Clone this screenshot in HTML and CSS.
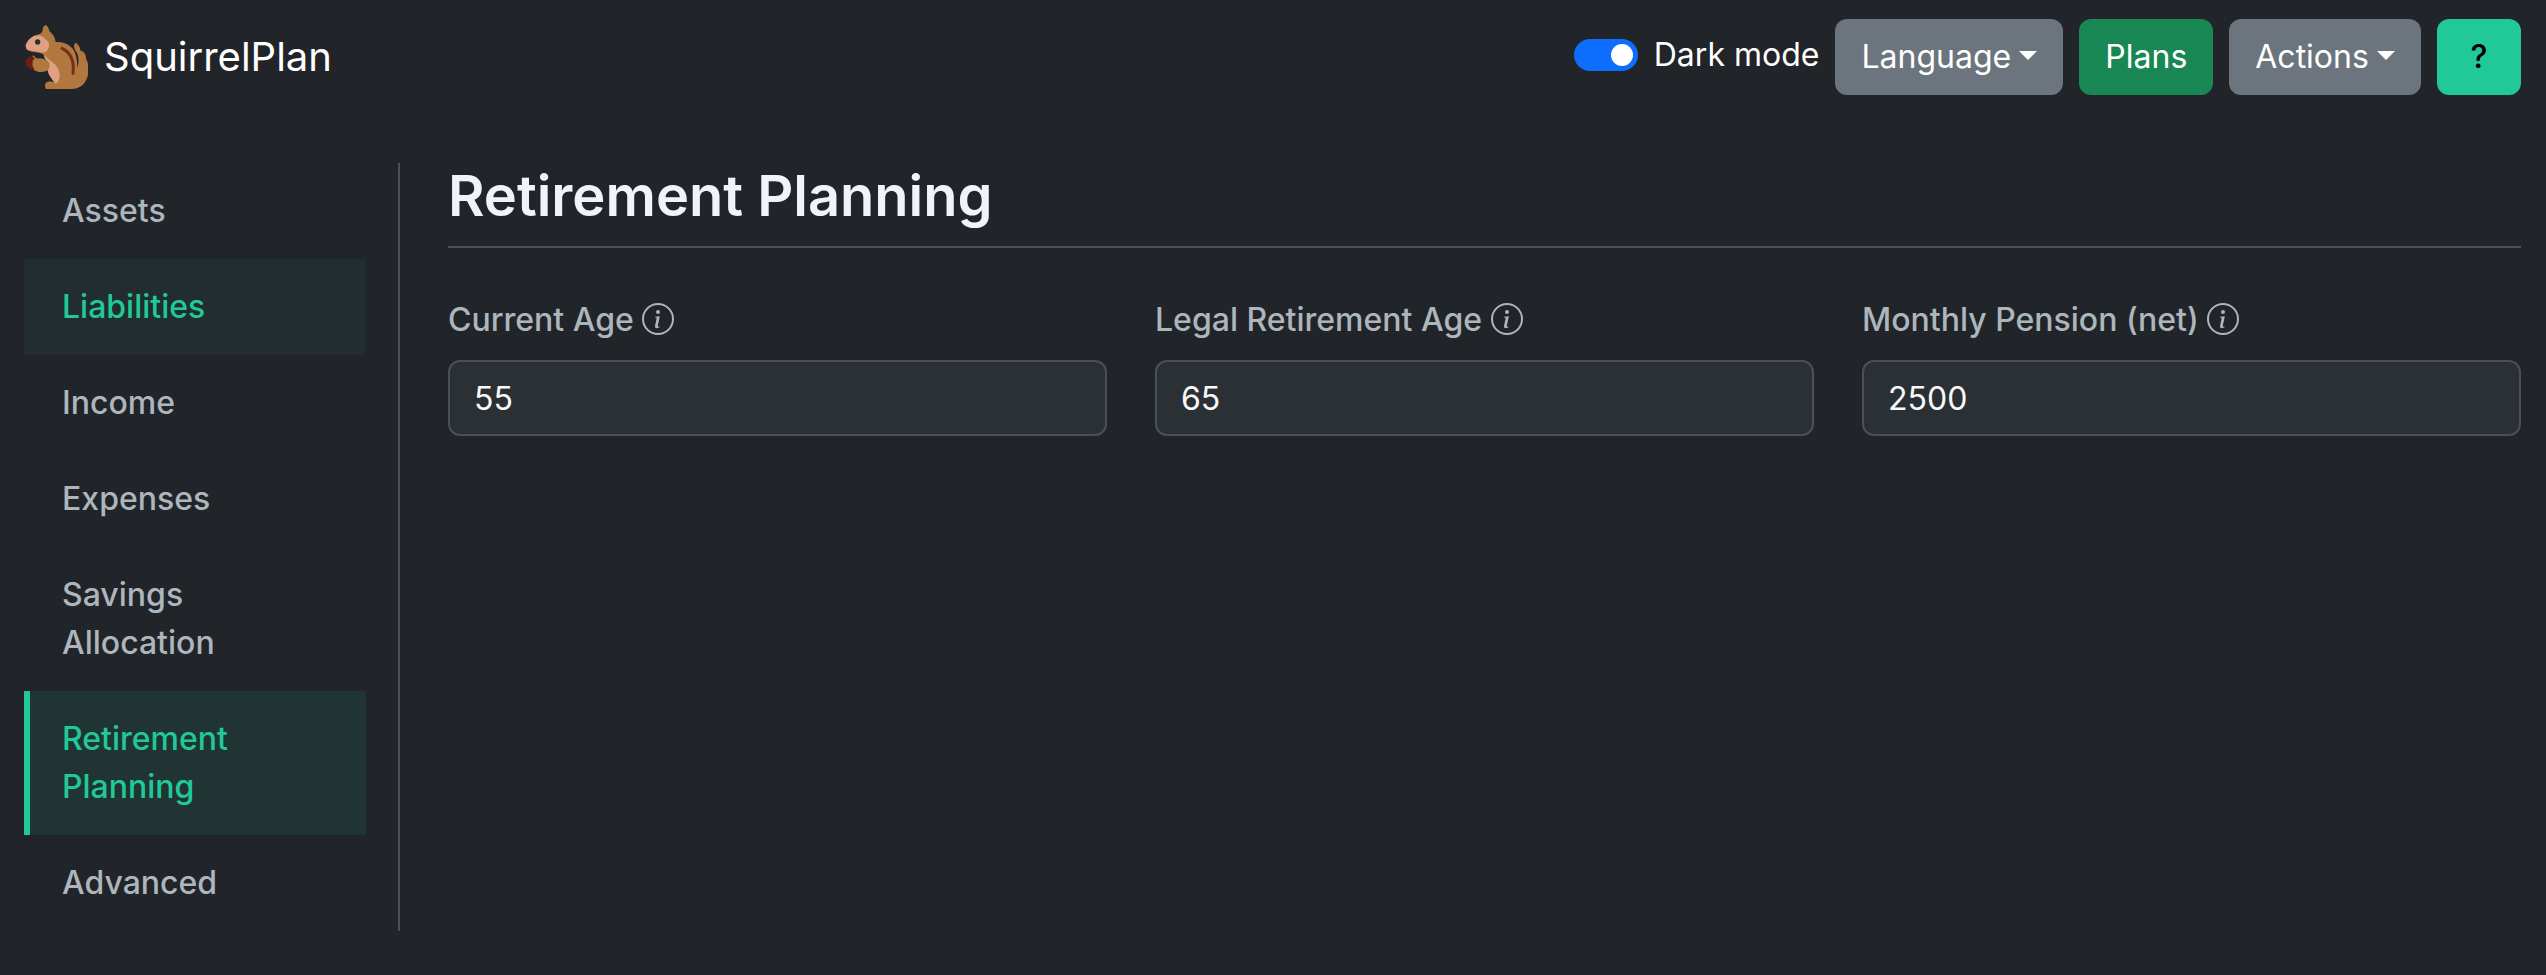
FILE: index.html
```html
<!DOCTYPE html>
<html lang="en">
<head>
<meta charset="utf-8">
<title>SquirrelPlan</title>
<link rel="stylesheet" href="styles.css">
</head>
<body>
<svg class="sprite" aria-hidden="true">
  <symbol id="info" viewBox="0 0 16 16">
    <path d="M8 15A7 7 0 1 1 8 1a7 7 0 0 1 0 14m0 1A8 8 0 1 0 8 0a8 8 0 0 0 0 16"/>
    <path d="m8.930 6.588-2.290.287-.082.380.450.083c.294.070.352.176.288.469l-.738 3.468c-.194.897.105 1.319.808 1.319.545 0 1.178-.252 1.465-.598l.088-.416c-.200.176-.492.246-.686.246-.275 0-.375-.193-.304-.533zM9 4.500a1 1 0 1 1-2 0 1 1 0 0 1 2 0"/>
  </symbol>
</svg>
<div class="page">
  <header class="topbar">
    <a class="brand">
      <svg class="brand-logo" viewBox="42 45 192 192">
        <path fill="#b0783f" d="M108 45C113 49 117 56 118 63C128 71 135 81 137 96C158 95 178 103 189 117C199 132 202 153 202 173C208 155 206 142 201 129C194 117 188 109 196 98C203 100 211 112 212 123C221 122 229 134 228 147C236 156 233 170 235 185C233 217 213 237 184 237H108C103 230 104 218 113 215C120 213 128 215 132 216C124 207 117 194 114 181C104 186 88 188 76 182C67 178 65 168 67 158C65 152 64 144 68 137C72 135 75 141 79 145C88 146 99 145 105 149C111 146 107 141 103 136C94 125 66 129 53 121C46 117 46 107 51 101C58 87 69 75 88 73C94 69 99 66 98 57C99 51 104 46 108 45Z"/>
        <path fill="#df9f82" d="M47 105C54 88 68 76 88 76C101 80 107 89 115 95C120 108 116 122 104 127C94 131 86 124 76 124C61 124 45 118 47 105Z"/>
        <path fill="#df9f82" d="M100 130C106 142 120 150 131 160C148 174 154 196 145 214C141 221 136 222 132 215C123 203 114 193 113 181C121 172 121 160 113 153L104 145Z"/>
        <path fill="#6f1f12" d="M68 140C73 142 77 146 69 151C66 159 66 170 73 177C61 180 48 169 47 158C46 146 58 137 68 140Z"/>
        <circle cx="83" cy="96" r="8" fill="#2a2d31"/>
        <path d="M156 115C181 126 194 154 189 190" fill="none" stroke="#7b2d16" stroke-width="9" stroke-linecap="round"/>
      </svg>
      <span>SquirrelPlan</span>
    </a>
    <div class="actions">
      <label class="switch"><span class="switch-track"><span class="switch-knob"></span></span><span>Dark mode</span></label>
      <button class="btn btn-secondary caret">Language</button>
      <button class="btn btn-success">Plans</button>
      <button class="btn btn-secondary caret">Actions</button>
      <button class="btn btn-help">?</button>
    </div>
  </header>
  <div class="layout">
    <nav class="sidebar">
      <a class="nav-item">Assets</a>
      <a class="nav-item nav-hover">Liabilities</a>
      <a class="nav-item">Income</a>
      <a class="nav-item">Expenses</a>
      <a class="nav-item">Savings Allocation</a>
      <a class="nav-item nav-active">Retirement Planning</a>
      <a class="nav-item">Advanced</a>
    </nav>
    <main class="content">
      <h1 class="title">Retirement Planning</h1>
      <div class="fields">
        <div class="field">
          <label class="field-label">Current Age <svg class="info"><use href="#info"/></svg></label>
          <input class="field-input" type="text" value="55">
        </div>
        <div class="field">
          <label class="field-label">Legal Retirement Age <svg class="info"><use href="#info"/></svg></label>
          <input class="field-input" type="text" value="65">
        </div>
        <div class="field">
          <label class="field-label">Monthly Pension (net) <svg class="info"><use href="#info"/></svg></label>
          <input class="field-input" type="text" value="2500">
        </div>
      </div>
    </main>
  </div>
</div>
</body>
</html>
```

FILE: styles.css
```css
* { box-sizing: border-box; }
body {
  margin: 0;
  background: #212529;
  color: #fff;
  font: 400 32px/48px Inter, "Noto Sans", sans-serif;
  overflow: hidden;
}
.sprite { display: none; }
.page { width: 2545px; }

.topbar {
  display: flex;
  align-items: center;
  justify-content: space-between;
  height: 114px;
  padding: 0 24px;
}
.brand { display: flex; align-items: center; gap: 16px; font-size: 40px; line-height: 60px; }
.brand-logo { width: 64px; height: 64px; }
.actions { display: flex; align-items: center; gap: 16px; }
.switch { display: flex; align-items: center; gap: 16px; padding-bottom: 4px; }
.switch-track {
  display: flex;
  align-items: center;
  justify-content: flex-end;
  width: 64px;
  height: 32px;
  padding-right: 5px;
  border-radius: 16px;
  background: #0d6efd;
}
.switch-knob { width: 22px; height: 22px; border-radius: 50%; background: #fff; }

.btn {
  height: 76px;
  padding: 12px 24px;
  border: 2px solid transparent;
  border-radius: 12px;
  color: #fff;
  font: inherit;
  white-space: nowrap;
}
.btn-secondary { background: #6c757d; border-color: #6c757d; }
.btn-success { background: #198754; border-color: #198754; }
.btn-help { width: 84px; background: #20c997; border-color: #20c997; color: #000; font-weight: 500; }
.caret::after {
  content: "";
  display: inline-block;
  margin-left: 8.16px;
  vertical-align: 8.16px;
  border: 9px solid transparent;
  border-top-color: #fff;
  border-bottom: 0;
}

.layout { display: flex; align-items: flex-start; gap: 48px; padding: 49px 24px 0; }
.sidebar {
  display: flex;
  flex-direction: column;
  flex: 0 0 376px;
  padding-right: 32px;
  border-right: 2px solid #495057;
}
.nav-item {
  padding: 24px 32px;
  border-left: 6px solid transparent;
  color: #adb5bd;
  font-weight: 500;
}
.nav-hover { background: rgba(32, 201, 151, 0.05); color: #20c997; }
.nav-active { background: rgba(32, 201, 151, 0.1); border-left-color: #20c997; color: #20c997; }

.content { flex: 1; min-width: 0; }
.title {
  margin: 0 0 48px;
  padding-bottom: 16px;
  border-bottom: 2px solid #495057;
  color: #f1f3f8;
  font-size: 56px;
  font-weight: 600;
  line-height: 67px;
}
.fields { display: grid; grid-template-columns: repeat(3, 1fr); gap: 48px; }
.field { display: flex; flex-direction: column; gap: 16px; min-width: 0; }
.field-label { height: 48px; color: #adb5bd; font-weight: 500; }
.info { width: 32px; height: 32px; vertical-align: -4px; fill: currentColor; }
.field-input {
  width: 100%;
  height: 76px;
  padding: 12px 24px;
  border: 2px solid #495057;
  border-radius: 12px;
  background: #2b3035;
  color: #f8f9fa;
  font: inherit;
}
```
